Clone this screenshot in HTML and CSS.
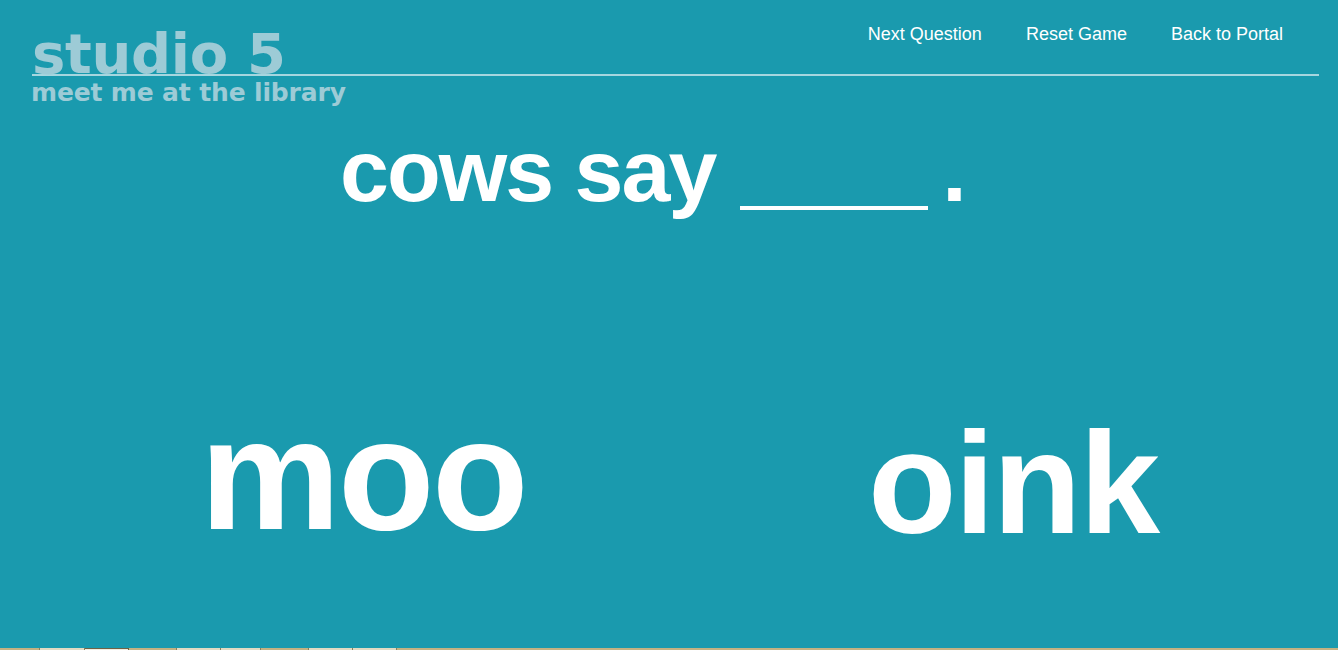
FILE: index.html
```html
<!DOCTYPE html>
<html lang="en">
<head>
<meta charset="utf-8">
<title>studio 5 - meet me at the library</title>
<link rel="stylesheet" href="styles.css">
</head>
<body>
<div class="page">
  <header class="header">
    <div class="header-row">
      <div class="logo">studio 5</div>
      <nav class="nav">
        <a class="nav-link" href="#">Next Question</a>
        <a class="nav-link" href="#">Reset Game</a>
        <a class="nav-link" href="#">Back to Portal</a>
      </nav>
    </div>
    <div class="tagline">meet me at the library</div>
  </header>
  <main class="game">
    <div class="question">cows say<span class="blank"></span><span class="stop">.</span></div>
    <div class="answers">
      <div class="answer answer-left">moo</div>
      <div class="answer answer-right">oink</div>
    </div>
  </main>
</div>
<div class="taskbar">
  <span class="tab tab-a"></span>
  <span class="tab tab-b"></span>
  <span class="tab tab-c"></span>
  <span class="tab tab-a w48"></span>
  <span class="tab tab-b w44"></span>
  <span class="tab tab-b w38"></span>
  <span class="tab tab-a w48"></span>
  <span class="tab tab-b w44"></span>
  <span class="tab tab-b w44"></span>
  <span class="tab tab-rest"></span>
</div>
</body>
</html>
```

FILE: styles.css
```css
html, body {
  margin: 0;
  padding: 0;
}

body {
  width: 1338px;
  height: 650px;
  overflow: hidden;
  background: #1a9aae;
  font-family: "Liberation Sans", Arial, sans-serif;
  color: #ffffff;
  display: flex;
  flex-direction: column;
}

.page {
  flex: 1;
  display: flex;
  flex-direction: column;
}

.header {
  padding: 0 19px 0 32px;
}

.header-row {
  height: 74px;
  display: flex;
  justify-content: space-between;
  align-items: flex-start;
  border-bottom: 2px solid #a6d6df;
}

.logo {
  margin-top: 32px;
  font-family: "DejaVu Sans", sans-serif;
  font-weight: bold;
  font-size: 56px;
  line-height: 44px;
  height: 44px;
  color: #9dcbd6;
  letter-spacing: -0.3px;
  white-space: nowrap;
}

.nav {
  margin-top: 24px;
  margin-right: 36px;
  display: flex;
  gap: 44px;
}

.nav-link {
  color: #ffffff;
  text-decoration: none;
  font-size: 18px;
  line-height: 20px;
}

.tagline {
  margin-top: 4px;
  margin-left: -1px;
  font-family: "DejaVu Sans", sans-serif;
  font-weight: bold;
  font-size: 25px;
  line-height: 25px;
  letter-spacing: -0.15px;
  color: #9dcbd6;
  white-space: nowrap;
}

.game {
  flex: 1;
  display: flex;
  flex-direction: column;
}

.question {
  margin-top: 22px;
  padding-left: 340px;
  font-weight: bold;
  font-size: 88px;
  line-height: 88px;
  letter-spacing: -2px;
  white-space: nowrap;
}

.blank {
  display: inline-block;
  width: 188px;
  height: 4px;
  margin-left: 25px;
  background: #ffffff;
  vertical-align: -9px;
}

.stop {
  margin-left: 14px;
}

.answers {
  margin-top: 178px;
  padding-left: 200px;
  display: flex;
  align-items: flex-start;
}

.answer {
  font-weight: bold;
  white-space: nowrap;
}

.answer-left {
  font-size: 158px;
  line-height: 158px;
  margin-top: 2px;
  letter-spacing: -2.5px;
}

.answer-right {
  margin-left: 342px;
  font-size: 145px;
  line-height: 145px;
  margin-top: 18px;
  letter-spacing: -2px;
}

.taskbar {
  height: 2px;
  display: flex;
  background: #c4b282;
}

.tab {
  display: block;
  height: 2px;
  box-sizing: border-box;
}

.tab-a {
  width: 40px;
  background: #c4b282;
  border-right: 1px solid #8c7f5c;
}

.tab-b {
  width: 45px;
  background: #e2dbc3;
  border-right: 1px solid #8c7f5c;
}

.tab-c {
  width: 44px;
  background: #f2eee0;
  border-top: 1px solid #6d6246;
  border-right: 1px solid #6d6246;
}

.w48 { width: 48px; }
.w44 { width: 44px; }
.w38 { width: 40px; }

.tab-rest {
  flex: 1;
  background: #c4b282;
}
```
